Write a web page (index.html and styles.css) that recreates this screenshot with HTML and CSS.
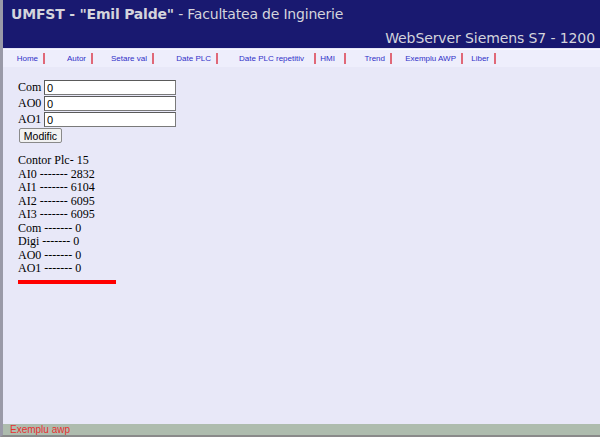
FILE: index.html
```html
<!DOCTYPE html>
<html>
<head>
<meta charset="utf-8">
<title>WebServer Siemens S7 - 1200</title>
<link rel="stylesheet" href="styles.css">
</head>
<body>
<div class="page">
  <header class="header">
    <div class="title"><b>UMFST - "Emil Palde"</b> - Facultatea de Inginerie</div>
    <div class="subtitle">WebServer Siemens S7 - 1200</div>
  </header>
  <nav class="nav">
    <a href="#" class="item">Home</a>
    <a href="#" class="item">Autor</a>
    <a href="#" class="item">Setare val</a>
    <a href="#" class="item">Date PLC</a>
    <a href="#" class="item pad10">Date PLC repetitiv</a>
    <a href="#" class="item pad9">HMI</a>
    <a href="#" class="item">Trend</a>
    <a href="#" class="item">Exemplu AWP</a>
    <a href="#" class="item">Liber</a>
  </nav>
  <main class="main">
    <form class="form">
      <div class="row"><span class="lbl">Com</span><input class="field" type="text" value="0"></div>
      <div class="row"><span class="lbl">AO0</span><input class="field" type="text" value="0"></div>
      <div class="row"><span class="lbl">AO1</span><input class="field" type="text" value="0"></div>
      <div class="row"><button type="button" class="btn">Modific</button></div>
    </form>
    <div class="data">
      <div>Contor Plc- 15</div>
      <div>AI0 ------- 2832</div>
      <div>AI1 ------- 6104</div>
      <div>AI2 ------- 6095</div>
      <div>AI3 ------- 6095</div>
      <div>Com ------- 0</div>
      <div>Digi ------- 0</div>
      <div>AO0 ------- 0</div>
      <div>AO1 ------- 0</div>
    </div>
    <div class="redline"></div>
  </main>
  <footer class="footer">Exemplu awp</footer>
</div>
</body>
</html>
```
FILE: styles.css
```css
html, body {
  margin: 0;
  padding: 0;
}
body {
  width: 600px;
  height: 437px;
  overflow: hidden;
  background: #e8e8f8;
}
.page {
  height: 437px;
  box-sizing: border-box;
  border-left: 3px solid #9a9aa8;
  border-bottom: 2px solid #8a8a8a;
  display: flex;
  flex-direction: column;
}
.header {
  background: #191970;
  color: #d4d4dc;
  font-family: "DejaVu Sans", Verdana, sans-serif;
  height: 48px;
  box-sizing: border-box;
  padding: 5px 5px 0 8px;
  display: flex;
  flex-direction: column;
}
.title {
  font-size: 14px;
  line-height: 18px;
  letter-spacing: -0.2px;
}
.subtitle {
  font-size: 14px;
  line-height: 18px;
  letter-spacing: -0.1px;
  text-align: right;
  margin-top: 6px;
}
.nav {
  height: 17px;
  margin-top: 1px;
  background: #eeeefc;
  border-top: 1px solid #f8f8ff;
  display: grid;
  grid-template-columns: 42px 48px 61px 64px 98px 30px 46px 71px 33px;
  align-items: center;
  font-family: "Liberation Sans", Arial, sans-serif;
  font-size: 8px;
}
.item {
  color: #3030c8;
  text-decoration: none;
  text-align: right;
  padding-right: 5px;
  border-right: 2px solid #e06878;
  line-height: 11px;
}
.item.pad10 { padding-right: 10px; }
.item.pad9 { padding-right: 9px; }
.main {
  flex: 1;
  padding: 13px 0 0 15px;
  font-family: "Liberation Serif", "Times New Roman", serif;
  font-size: 12px;
  color: #000;
}
.form {
  margin: 0;
  display: flex;
  flex-direction: column;
  gap: 1px;
}
.row {
  display: flex;
  align-items: center;
  height: 15px;
}
.lbl {
  width: 26px;
  line-height: 15px;
}
.field {
  width: 132px;
  height: 15px;
  box-sizing: border-box;
  border: 1px solid #7a7a7a;
  border-top-color: #5a5a5a;
  border-left-color: #5a5a5a;
  background: #fff;
  padding: 0 2px;
  margin: 0;
  font-family: "Liberation Sans", Arial, sans-serif;
  font-size: 11px;
  color: #000;
}
.btn {
  margin: 0 0 0 1px;
  width: 43px;
  height: 15px;
  padding: 0;
  box-sizing: border-box;
  border: 1px solid #8a8a8a;
  border-radius: 2px;
  background: #f2f2f2;
  font-family: "Liberation Sans", Arial, sans-serif;
  font-size: 10.5px;
  color: #000;
}
.data {
  margin-top: 11px;
  line-height: 13.5px;
}
.redline {
  width: 98px;
  height: 4px;
  background: #ff0000;
  margin-top: 4px;
}
.footer {
  height: 11px;
  background: #aebcae;
  color: #e83030;
  font-family: "Liberation Sans", Arial, sans-serif;
  font-size: 10px;
  line-height: 11px;
  padding-left: 7px;
}
```
